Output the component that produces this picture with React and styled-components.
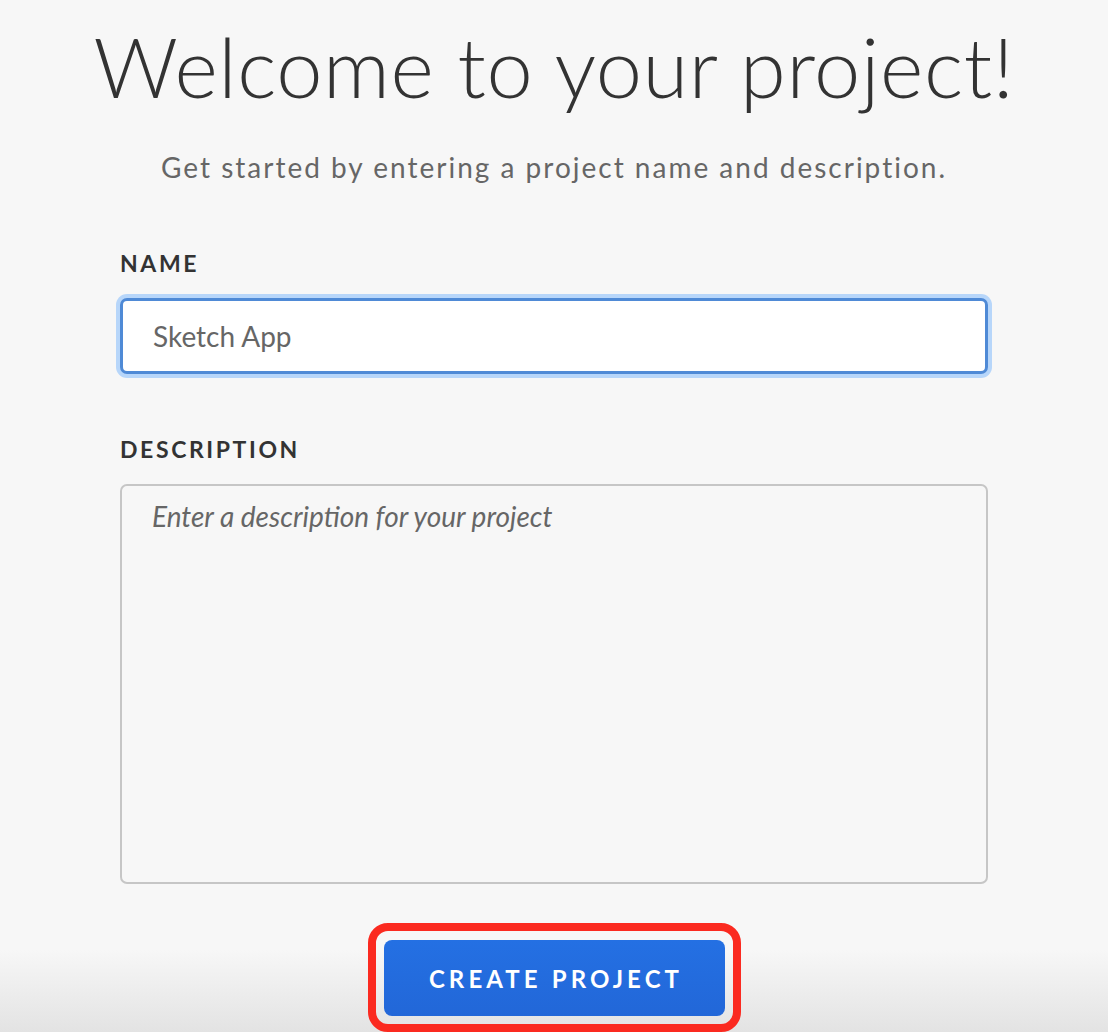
import React from "react";
import styled, { createGlobalStyle } from "styled-components";

const Global = createGlobalStyle`
  html, body { margin: 0; padding: 0; }
  body {
    background: #f7f7f7;
    font-family: Lato, "Open Sans", "Liberation Sans", sans-serif;
    height: 1032px;
    overflow: hidden;
  }
`;

const Page = styled.div`
  position: relative;
  height: 1032px;
  display: flex;
  flex-direction: column;
  align-items: center;
  background: linear-gradient(to bottom, #f7f7f7 0px, #f7f7f7 950px, #e3e3e3 1032px);
`;

const Title = styled.h1`
  margin: 16px 0 0;
  font-family: Lato, sans-serif;
  font-weight: 300;
  font-size: 83px;
  line-height: 100px;
  color: #333333;
  letter-spacing: 0.6px;
`;

const Subtitle = styled.p`
  margin: 34px 0 0;
  font-family: Lato, sans-serif;
  font-size: 28px;
  line-height: 34px;
  color: #666666;
  letter-spacing: 2px;
`;

const Form = styled.form`
  width: 868px;
  margin-top: 65px;
  display: flex;
  flex-direction: column;
`;

const Field = styled.div`
  display: flex;
  flex-direction: column;
  margin-bottom: ${(p) => p.$gap || 0}px;
`;

const Label = styled.label`
  font-family: Lato, sans-serif;
  font-weight: 700;
  font-size: 23px;
  line-height: 28px;
  letter-spacing: 2.6px;
  color: #333333;
  margin-bottom: 21px;
`;

const Input = styled.input`
  box-sizing: border-box;
  width: 100%;
  height: 76px;
  padding: 0 30px;
  border: 3px solid #4f8ad6;
  border-radius: 7px;
  background: #ffffff;
  box-shadow: 0 0 0 4px #b7d6fa;
  font-family: Lato, sans-serif;
  font-size: 28px;
  color: #666666;
  outline: none;
`;

const TextArea = styled.textarea`
  box-sizing: border-box;
  width: 100%;
  height: 400px;
  padding: 13px 30px;
  border: 2px solid #c6c6c6;
  border-radius: 7px;
  background: #f7f7f7;
  resize: none;
  font-family: Lato, sans-serif;
  font-size: 28px;
  line-height: 34px;
  color: #666666;
  outline: none;
  &::placeholder {
    color: #666666;
    font-style: italic;
    opacity: 1;
  }
`;

const ButtonRow = styled.div`
  display: flex;
  justify-content: center;
  margin-top: 56px;
`;

const Highlight = styled.div`
  position: relative;
  display: inline-flex;
`;

const Ring = styled.span`
  position: absolute;
  left: -16px;
  top: -17px;
  right: -16px;
  bottom: -16px;
  border: 8px solid #fb2a20;
  border-radius: 20px;
  pointer-events: none;
`;

const Button = styled.button`
  width: 341px;
  height: 76px;
  border: none;
  border-radius: 8px;
  background: linear-gradient(to bottom, #2470e3, #2267d8);
  color: #ffffff;
  font-family: Lato, sans-serif;
  font-weight: 700;
  font-size: 24px;
  letter-spacing: 4.1px;
  padding: 0 0 0 4px;
  cursor: pointer;
`;

export default function App() {
  return (
    <>
      <Global />
      <Page>
        <Title>Welcome to your project!</Title>
        <Subtitle>Get started by entering a project name and description.</Subtitle>
        <Form onSubmit={(e) => e.preventDefault()}>
          <Field $gap={61}>
            <Label htmlFor="name">NAME</Label>
            <Input id="name" defaultValue="Sketch App" />
          </Field>
          <Field>
            <Label htmlFor="desc">DESCRIPTION</Label>
            <TextArea id="desc" placeholder="Enter a description for your project" />
          </Field>
          <ButtonRow>
            <Highlight>
              <Ring />
              <Button type="submit">CREATE PROJECT</Button>
            </Highlight>
          </ButtonRow>
        </Form>
      </Page>
    </>
  );
}
